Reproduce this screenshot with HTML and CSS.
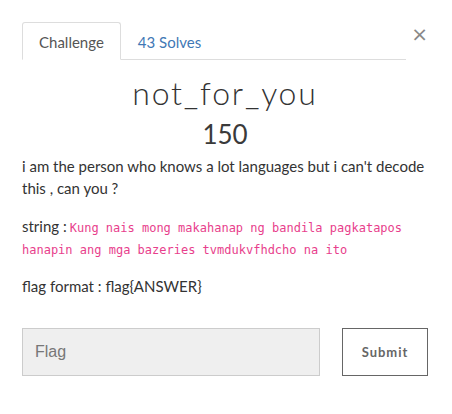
FILE: index.html
```html
<!DOCTYPE html>
<html>
<head>
<meta charset="utf-8">
<link rel="stylesheet" href="styles.css">
</head>
<body>
<div class="modal">
  <div class="header">
    <ul class="tabs">
      <li class="tab active">Challenge</li>
      <li class="tab link">43 Solves</li>
    </ul>
    <span class="close">&times;</span>
  </div>
  <h2 class="title">not_for_you</h2>
  <h3 class="points">150</h3>
  <div class="desc">
    <p>i am the person who knows a lot languages but i can't decode this , can you ?</p>
    <p>string :<code class="str">Kung nais mong makahanap ng bandila pagkatapos hanapin ang mga bazeries tvmdukvfhdcho na ito</code></p>
    <p>flag format : flag{ANSWER}</p>
  </div>
  <form class="submit-row">
    <input class="flag-input" type="text" placeholder="Flag">
    <button class="submit-btn" type="button">Submit</button>
  </form>
</div>
</body>
</html>
```
FILE: styles.css
```css
html, body {
  margin: 0;
  padding: 0;
  background: #fff;
}
body {
  font-family: Lato, "Open Sans", sans-serif;
  color: #333;
}
.modal {
  padding: 22px 24px 0 22px;
}
.header {
  display: flex;
  align-items: flex-start;
}
.tabs {
  list-style: none;
  margin: 0;
  padding: 0;
  display: flex;
  width: 394px;
  border-bottom: 1px solid #ddd;
  height: 37px;
}
.tab {
  font-size: 15px;
  line-height: 20px;
  padding: 9px 16px 8px 16px;
  margin-bottom: -1px;
  border: 1px solid transparent;
  border-radius: 3px 3px 0 0;
}
.tab.active {
  color: #555;
  border-color: #ddd #ddd #fff #ddd;
  background: #fff;
}
.tab.link {
  color: #3f78b5;
}
.close {
  margin-left: 5px;
  margin-top: 2px;
  font-family: "DejaVu Sans", sans-serif;
  font-size: 20px;
  line-height: 20px;
  color: #888;
}
.title {
  margin: 13px 0 0 0;
  text-align: center;
  font-weight: 300;
  font-size: 32px;
  line-height: 40px;
  letter-spacing: 1.8px;
  color: #333;
}
.points {
  margin: 4px 0 0 0;
  text-align: center;
  font-weight: 400;
  font-size: 26px;
  line-height: 34px;
  color: #3a3a3a;
}
.desc {
  margin-top: 4px;
  font-size: 15px;
  line-height: 22px;
}
.desc p {
  margin: 0 0 16px 0;
}
.str {
  margin-left: 3px;
  font-family: "DejaVu Sans Mono", monospace;
  font-size: 12px;
  line-height: 1;
  color: #e83e8c;
}
.submit-row {
  display: flex;
  gap: 22px;
  margin-top: 31px;
}
.flag-input {
  box-sizing: border-box;
  width: 298px;
  height: 48px;
  border: 1px solid #ccc;
  background: #efefef;
  padding: 0 12px;
  font-family: "Liberation Sans", Arial, sans-serif;
  font-size: 16px;
  outline: none;
}
.flag-input::placeholder {
  color: #777;
}
.submit-btn {
  box-sizing: border-box;
  width: 86px;
  height: 48px;
  border: 1px solid #666;
  background: #fff;
  color: #666;
  font-family: Lato, sans-serif;
  font-weight: 700;
  font-size: 13px;
  letter-spacing: 1px;
}
```
